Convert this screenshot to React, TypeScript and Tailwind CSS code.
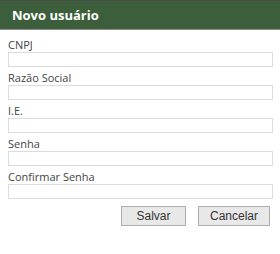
export default function App() {
  const fields = ["CNPJ", "Razão Social", "I.E.", "Senha", "Confirmar Senha"];

  return (
    <div className="w-[280px] h-[254px] bg-white" style={{ fontFamily: '"Open Sans", "Noto Sans", sans-serif' }}>
      <div className="h-[30px] bg-[#3c5e3a] border-t border-t-[#4a4a4a] border-b border-b-[#8a8a8a] flex items-center px-3">
        <h1 className="text-white font-bold text-[13px] leading-none">Novo usuário</h1>
      </div>
      <div className="px-2 pt-[8px]">
        {fields.map((f) => (
          <div key={f} className="mb-[4px]">
            <label className="block text-[11px] leading-[14px] text-[#444]">{f}</label>
            <input
              type={f.includes("Senha") ? "password" : "text"}
              className="block w-[265px] h-[15px] border border-[#dcdcdc] bg-white outline-none"
            />
          </div>
        ))}
        <div className="flex justify-end gap-3 pr-[2px] mt-[7px]">
          <button className="w-[65px] h-[20px] bg-[#e8e8e8] border border-[#adadad] text-[12px] leading-none text-[#333]" style={{ fontFamily: '"Liberation Sans", Arial, sans-serif' }}>
            Salvar
          </button>
          <button className="w-[72px] h-[20px] bg-[#e8e8e8] border border-[#adadad] text-[12px] leading-none text-[#333]" style={{ fontFamily: '"Liberation Sans", Arial, sans-serif' }}>
            Cancelar
          </button>
        </div>
      </div>
    </div>
  );
}
